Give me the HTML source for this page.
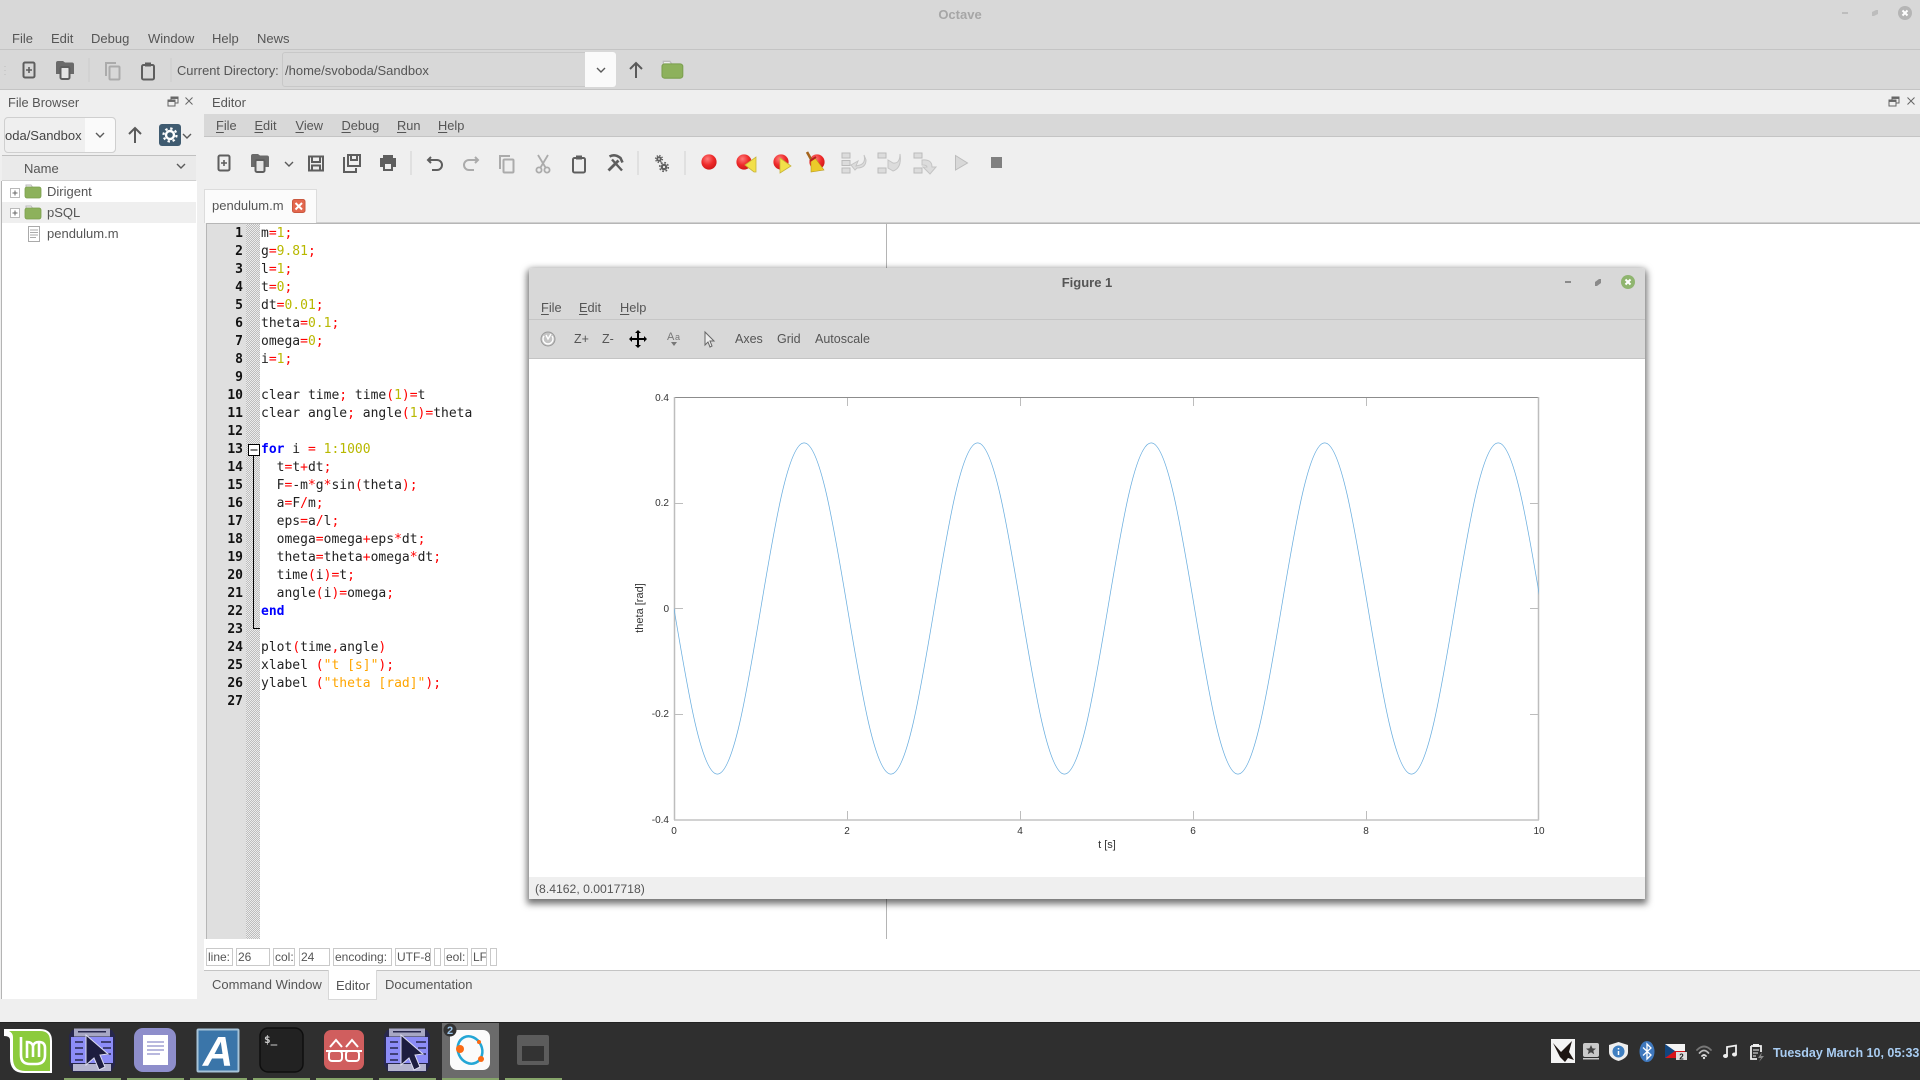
<!DOCTYPE html>
<html><head><meta charset="utf-8"><title>Octave</title>
<style>
html,body{margin:0;padding:0;width:1920px;height:1080px;overflow:hidden;background:#efefef}
body{position:relative;font-family:"Liberation Sans",sans-serif;font-size:13px;color:#555}
.b{position:absolute;box-sizing:border-box}
.t{position:absolute;white-space:pre;line-height:18px;height:18px}
.t u{text-decoration:underline;text-underline-offset:2px}
svg{position:absolute;left:0;top:0;overflow:visible}
#code,#nums{position:absolute;font-family:"DejaVu Sans Mono","Liberation Mono",monospace;font-size:13px;line-height:18px;white-space:pre;color:#222}
#nums{left:207px;width:36px;top:224.7px;text-align:right;font-weight:bold;color:#111}
#code{left:261px;top:224.7px}
#code i{font-style:normal;color:#f00}
#code b{font-weight:normal;color:#b8b800}
#code s{text-decoration:none;color:#ffa500}
#code em{font-style:normal;font-weight:bold;color:#00f}
.sb{position:absolute;top:948px;height:18px;box-sizing:border-box;border:1px solid #c9c9c9;line-height:17px;font-size:12px;padding-left:1px;white-space:pre;color:#555;overflow:hidden}
.tick{font-size:10px;color:#333;position:absolute;line-height:12px;white-space:pre}
</style></head><body>

<!-- main window backgrounds -->
<div class="b" style="left:0;top:0;width:1920px;height:89px;background:#d8d8d8"></div>
<div class="b" style="left:0;top:49px;width:1920px;height:1px;background:#c4c4c4"></div>
<div class="b" style="left:0;top:89px;width:1920px;height:1px;background:#c4c4c4"></div>
<div class="t" style="left:0;width:1920px;text-align:center;top:6px;font-weight:bold;color:#a6a6a6">Octave</div>

<div class="t" style="left:12px;top:30px">File</div>
<div class="t" style="left:51px;top:30px">Edit</div>
<div class="t" style="left:91px;top:30px">Debug</div>
<div class="t" style="left:148px;top:30px">Window</div>
<div class="t" style="left:212px;top:30px">Help</div>
<div class="t" style="left:257px;top:30px">News</div>

<div class="t" style="left:177px;top:62px;font-size:12.9px">Current Directory:</div>
<div class="b" style="left:282px;top:52px;width:334px;height:35px;border:1px solid #c8c8c8;border-radius:3px;background:#d8d8d8"></div>
<div class="b" style="left:585px;top:52px;width:31px;height:35px;background:#fafafa;border-radius:0 3px 3px 0"></div>
<div class="t" style="left:285px;top:62px">/home/svoboda/Sandbox</div>

<!-- file browser -->
<div class="t" style="left:8px;top:94px;font-size:12.8px">File Browser</div>
<div class="b" style="left:4px;top:117px;width:112px;height:36px;border:1px solid #cfcfcf;border-radius:4px;background:#efefef"></div>
<div class="b" style="left:85px;top:118px;width:30px;height:34px;background:#fafafa;border-radius:0 4px 4px 0"></div>
<div class="t" style="left:5px;top:126.500px;color:#444">oda/Sandbox</div>
<div class="b" style="left:2px;top:155px;width:194px;height:26px;background:#eaeaea;border-top:1px solid #c0c0c0;border-bottom:1px solid #d0d0d0"></div>
<div class="t" style="left:24px;top:160px">Name</div>
<div class="b" style="left:1px;top:181px;width:196px;height:818px;background:#fff;border-left:1px solid #b4b4b4"></div>
<div class="b" style="left:2px;top:202px;width:194px;height:21px;background:#efefef"></div>
<div class="t" style="left:47px;top:183px">Dirigent</div>
<div class="t" style="left:47px;top:204px">pSQL</div>
<div class="t" style="left:47px;top:224.500px">pendulum.m</div>

<!-- editor -->
<div class="t" style="left:212px;top:94px">Editor</div>
<div class="b" style="left:204px;top:114px;width:1716px;height:23px;background:#d8d8d8;border-bottom:1px solid #c4c4c4"></div>
<div class="t" style="left:216px;top:117px;font-size:12.8px"><u>F</u>ile</div>
<div class="t" style="left:254.500px;top:117px;font-size:12.8px"><u>E</u>dit</div>
<div class="t" style="left:295.500px;top:117px;font-size:12.8px"><u>V</u>iew</div>
<div class="t" style="left:341.500px;top:117px;font-size:12.8px"><u>D</u>ebug</div>
<div class="t" style="left:397px;top:117px;font-size:12.8px"><u>R</u>un</div>
<div class="t" style="left:438px;top:117px;font-size:12.8px"><u>H</u>elp</div>

<div class="b" style="left:204px;top:189px;width:113px;height:34px;background:#fbfbfb;border:1px solid #dcdcdc;border-bottom:none"></div>
<div class="t" style="left:212px;top:197px">pendulum.m</div>

<div class="b" style="left:204px;top:939px;width:1716px;height:31px;background:#fff"></div>
<div class="b" style="left:206px;top:223px;width:1714px;height:716px;background:#fff;border-top:1px solid #b6b6b6;border-left:1px solid #b6b6b6"></div>
<div class="b" style="left:207px;top:224px;width:39px;height:715px;background:#dfdfdf"></div>
<div class="b" style="left:246px;top:224px;width:14px;height:715px;background:repeating-conic-gradient(#bdbdbd 0 25%,#ececec 0 50%) 0 0/2px 2px"></div>
<div class="b" style="left:886px;top:224px;width:1px;height:715px;background:#b4b4b4"></div>
<div class="b" style="left:316px;top:222px;width:1604px;height:1px;background:#cfcfcf"></div>

<div id="nums">1
2
3
4
5
6
7
8
9
10
11
12
13
14
15
16
17
18
19
20
21
22
23
24
25
26
27</div>
<div id="code">m<i>=</i><b>1</b><i>;</i>
g<i>=</i><b>9.81</b><i>;</i>
l<i>=</i><b>1</b><i>;</i>
t<i>=</i><b>0</b><i>;</i>
dt<i>=</i><b>0.01</b><i>;</i>
theta<i>=</i><b>0.1</b><i>;</i>
omega<i>=</i><b>0</b><i>;</i>
i<i>=</i><b>1</b><i>;</i>

clear time<i>;</i> time<i>(</i><b>1</b><i>)=</i>t
clear angle<i>;</i> angle<i>(</i><b>1</b><i>)=</i>theta

<em>for</em> i <i>=</i> <b>1:1000</b>
  t<i>=</i>t<i>+</i>dt<i>;</i>
  F<i>=</i>-m<i>*</i>g<i>*</i>sin<i>(</i>theta<i>);</i>
  a<i>=</i>F<i>/</i>m<i>;</i>
  eps<i>=</i>a<i>/</i>l<i>;</i>
  omega<i>=</i>omega<i>+</i>eps<i>*</i>dt<i>;</i>
  theta<i>=</i>theta<i>+</i>omega<i>*</i>dt<i>;</i>
  time<i>(</i>i<i>)=</i>t<i>;</i>
  angle<i>(</i>i<i>)=</i>omega<i>;</i>
<em>end</em>

plot<i>(</i>time<i>,</i>angle<i>)</i>
xlabel <i>(</i><s>"t [s]"</s><i>);</i>
ylabel <i>(</i><s>"theta [rad]"</s><i>);</i>
</div>

<!-- status bar -->
<div class="sb" style="left:206px;width:27px">line:</div>
<div class="sb" style="left:236px;width:34px">26</div>
<div class="sb" style="left:273px;width:22px">col:</div>
<div class="sb" style="left:299px;width:31px">24</div>
<div class="sb" style="left:333px;width:59px">encoding:</div>
<div class="sb" style="left:395px;width:36px">UTF-8</div>
<div class="sb" style="left:434px;width:7px"></div>
<div class="sb" style="left:444px;width:24px">eol:</div>
<div class="sb" style="left:471px;width:16px">LF</div>
<div class="sb" style="left:490px;width:7px"></div>
<div class="b" style="left:204px;top:970px;width:1716px;height:1px;background:#c4c4c4"></div>

<div class="b" style="left:328px;top:970px;width:49px;height:30px;background:#fff;border:1px solid #d8d8d8;border-top:none"></div>
<div class="t" style="left:212px;top:976px">Command Window</div>
<div class="t" style="left:336px;top:977px">Editor</div>
<div class="t" style="left:385px;top:976px">Documentation</div>

<!-- base icons -->
<svg width="1920" height="1080" viewBox="0 0 1920 1080">
<defs>
<radialGradient id="rb" cx=".4" cy=".3" r=".8"><stop offset="0" stop-color="#ff7a7a"/><stop offset=".5" stop-color="#ee2a2a"/><stop offset="1" stop-color="#c81414"/></radialGradient>
<g id="up" fill="none" stroke="#5a5a5a" stroke-width="2"><path d="M0-7V8M-6-1 0-7 6-1"/></g>
<g id="chev" fill="none" stroke="#5a5a5a" stroke-width="1.4"><path d="M-4-2 0 2 4-2"/></g>
<g id="new"><rect x="-5.5" y="-7.5" width="11" height="15" rx="1.5" fill="none" stroke="#5e5e5e" stroke-width="2"/><path d="M0-3V3M-3 0H3" stroke="#5e5e5e" stroke-width="1.6"/></g>
<g id="open"><path d="M-9 4V-7Q-9-9-7-9H-2L0-7.5H7Q9-7.5 9-5.5V4Z" fill="#6a6a6a"/><rect x="-4.500" y="-3" width="9" height="12" rx="1.500" fill="#e4e4e4" stroke="#5e5e5e" stroke-width="2"/></g>
<g id="copy" fill="none" stroke="#ababab" stroke-width="2"><path d="M-7 5V-8H3"/><rect x="-3.5" y="-4.5" width="10" height="13" rx="1"/></g>
<g id="paste"><rect x="-6" y="-6" width="12" height="14.5" rx="1.5" fill="none" stroke="#5e5e5e" stroke-width="2"/><rect x="-3" y="-8.5" width="6" height="4" fill="#5e5e5e"/></g>
<g id="star"><path d="M0-5 1.5-1.6 5-1.4 2.3.8 3.2 4.2 0 2.3-3.2 4.2-2.3.8-5-1.4-1.5-1.6Z" fill="#444"/></g>
<g id="folder"><path d="M1 3V1H6L7.5 3" fill="#efefef" stroke="#bbb"/><rect x="0" y="3" width="16" height="11" rx="2" fill="#8db15c" stroke="#7b9f4e" stroke-width=".8"/></g>
<g id="exp"><rect x=".5" y=".5" width="9" height="9" fill="#fff" stroke="#b9b9b9"/><path d="M2.5 5H7.5M5 2.5V7.5" stroke="#666"/></g>
<g id="undock" fill="none" stroke="#666" stroke-width="1"><rect x="3" y="0" width="7" height="6" fill="#efefef"/><path d="M3 1.2H10" stroke-width="1.500"/><rect x="0" y="3" width="7" height="6" fill="#efefef"/><path d="M0 4.200H7" stroke-width="1.500"/></g>
<g id="xs" stroke="#666" stroke-width="1"><path d="M-3.500-3.500 3.500 3.500M3.500-3.500-3.500 3.500"/></g>
<g id="redball"><circle r="7.6" fill="url(#rb)"/></g>
<g id="arrowblock"><rect x="0" y="0" width="8" height="5" fill="#dcdcdc" stroke="#bbb"/></g>
</defs>

<!-- main toolbar -->
<path d="M5 66v1M5 70v1M5 74v1" stroke="#bbb"/>
<use href="#new" x="29" y="70"/>
<use href="#open" x="65" y="70"/>
<path d="M89 58V82M171 58V82" stroke="#cdcdcd"/>
<use href="#copy" x="113" y="71"/>
<use href="#paste" x="148" y="71"/>
<use href="#chev" x="601" y="70"/>
<use href="#up" x="636" y="70"/>
<g transform="translate(662 60) scale(1.3)"><use href="#folder"/></g>

<!-- dock headers -->
<use href="#undock" x="168" y="97"/>
<use href="#xs" x="189" y="101"/>
<use href="#undock" x="1889" y="97"/>
<use href="#xs" x="1911" y="101"/>

<!-- file browser icons -->
<use href="#chev" x="100" y="135"/>
<use href="#up" x="135" y="135"/>
<rect x="159" y="124" width="22" height="22" rx="3" fill="#3f5b70"/>
<circle cx="170" cy="135" r="4" fill="none" stroke="#fff" stroke-width="2.4"/>
<circle cx="170" cy="135" r="6.5" fill="none" stroke="#fff" stroke-width="2.2" stroke-dasharray="2.4 2.7"/>
<use href="#chev" x="187" y="136"/>
<use href="#chev" x="181" y="166"/>
<use href="#exp" x="10" y="188"/>
<use href="#exp" x="10" y="208"/>
<use href="#folder" x="25" y="184"/>
<use href="#folder" x="25" y="205"/>
<rect x="28.5" y="226.5" width="11" height="15" fill="#fff" stroke="#aaa"/>
<path d="M30 230H38M30 232.5H38M30 235H38M30 237.5H36" stroke="#aaa"/>

<!-- editor toolbar -->
<use href="#new" x="224" y="163"/>
<use href="#open" x="260" y="163"/>
<use href="#chev" x="289" y="164"/>
<g fill="none" stroke="#5e5e5e" stroke-width="2">
<path d="M309 156.5H323V170.5H309ZM312 156.5V162H320V156.5M312 170.5V165.5H320V170.5"/>
<path d="M348 155H360V166H348ZM351 155V160H357V155M345 158H344V172H356V168"/>
</g>
<path d="M383 158V155H393V158H396V167H393V171H383V167H380V158ZM385 164V169H391V164Z" fill="#5e5e5e" fill-rule="evenodd"/>
<path d="M411 151V175M638 151V175M685 151V175" stroke="#d0d0d0"/>
<path d="M431 157 428 160 431 163M428 160H437A5 5 0 0 1 437 170H432" fill="none" stroke="#5e5e5e" stroke-width="2"/>
<path d="M475 157 478 160 475 163M478 160H469A5 5 0 0 0 469 170H474" fill="none" stroke="#ababab" stroke-width="2"/>
<use href="#copy" x="507" y="164"/>
<g fill="none" stroke="#ababab" stroke-width="1.8"><circle cx="539" cy="170" r="2.6"/><circle cx="547" cy="170" r="2.6"/><path d="M540.5 167.5 548 155M545.5 167.5 538 155"/></g>
<use href="#paste" x="579" y="164"/>
<g fill="none" stroke="#5e5e5e"><path d="M608.500 170.500 618.500 160.500" stroke-width="2.800"/><path d="M622 170.500 612 159.500" stroke-width="2.400"/><path d="M609.500 156.500Q615 153.500 620.500 158L622.500 162.500" stroke-width="2.600"/></g>
<g fill="none" stroke="#5e5e5e"><circle cx="659" cy="159" r="1.800" stroke-width="1.800"/><circle cx="659" cy="159" r="3.400" stroke-width="1.400" stroke-dasharray="1.300 1.400"/><circle cx="664" cy="167" r="2.200" stroke-width="2.200"/><circle cx="664" cy="167" r="4.300" stroke-width="1.600" stroke-dasharray="1.700 1.700"/></g>

<use href="#redball" x="709" y="162"/>
<use href="#redball" x="744" y="162"/>
<path d="M745 165 756 157V172L754 172Z" fill="#f2e04a" stroke="#c8b43a" stroke-width=".8"/>
<use href="#redball" x="781" y="162"/>
<path d="M780 158 791 166 780 173Z" fill="#f2e04a" stroke="#c8b43a" stroke-width=".8"/>
<use href="#redball" x="817" y="162"/>
<path d="M807 152 812 161" stroke="#a5641c" stroke-width="2.600"/>
<path d="M811 160 815 158 824 170 811 172Z" fill="#eccb2a" stroke="#b99a1c" stroke-width=".6"/>
<path d="M810 161 816 157" stroke="#b82020" stroke-width="2"/>

<use href="#arrowblock" x="842" y="153"/><use href="#arrowblock" x="842" y="160.500"/><use href="#arrowblock" x="842" y="168"/>
<path d="M864 155Q866 163 860 165L856 166 858 161 851 165 855 170 857 168Q866 168 866 160Z" fill="#dcdcdc" stroke="#c4c4c4"/>
<use href="#arrowblock" x="878" y="153"/><use href="#arrowblock" x="878" y="168"/>
<path d="M900 154Q900 164 893 163L888 160V168L893 171Q902 168 900 154Z" fill="#dcdcdc" stroke="#c4c4c4"/>
<use href="#arrowblock" x="914" y="153"/><use href="#arrowblock" x="914" y="168"/>
<path d="M922 160Q932 159 932 167H936L930 174 923 167H927Q927 165 922 165Z" fill="#dcdcdc" stroke="#c4c4c4"/>
<path d="M955.500 155.500 967.500 163 955.500 170Z" fill="#d8d8d8" stroke="#bcbcbc"/>
<rect x="991" y="157" width="11" height="11" fill="#808080"/>

<!-- tab close -->
<rect x="292.500" y="199.500" width="12.500" height="13" rx="2" fill="#e4674e" stroke="#c9583f"/>
<path d="M295.500 203 302 209.500M302 203 295.500 209.500" stroke="#fff" stroke-width="2"/>

<!-- window controls -->
<rect x="1842" y="12" width="6" height="2" fill="#bdbdbd"/>
<path d="M1872 16V12L1876 10H1878V14L1874 16Z" fill="#bdbdbd"/>
<circle cx="1905" cy="13" r="7" fill="#b5b5b5"/>
<path d="M1902.500 10.500 1907.500 15.500M1907.500 10.500 1902.500 15.500" stroke="#fff" stroke-width="2"/>

<!-- fold marker -->
<rect x="248.500" y="444.500" width="11" height="11" fill="#fff" stroke="#000"/>
<path d="M250.500 450H257.500" stroke="#000"/>
<path d="M253.500 456V628.500H260" fill="none" stroke="#000"/>
</svg>

<!-- figure window -->
<div class="b" style="left:529px;top:268px;width:1116px;height:631px;background:#fff;box-shadow:0 3px 7px 2px rgba(0,0,0,.55);border-radius:3px 3px 0 0;overflow:hidden">
<div class="b" style="left:0;top:0;width:1116px;height:91px;background:#d8d8d8;border-bottom:1px solid #c4c4c4"></div>
<div class="b" style="left:0;top:51px;width:1116px;height:1px;background:#c6c6c6"></div>
<div class="b" style="left:0;top:609px;width:1116px;height:22px;background:#efefef"></div>
</div>
<div class="t" style="left:529px;width:1116px;text-align:center;top:274px;font-weight:bold;color:#555">Figure 1</div>
<div class="t" style="left:541px;top:299px;font-size:12.8px"><u>F</u>ile</div>
<div class="t" style="left:579px;top:299px;font-size:12.8px"><u>E</u>dit</div>
<div class="t" style="left:620px;top:299px;font-size:12.8px"><u>H</u>elp</div>
<div class="t" style="left:574px;top:330px;font-size:12.500px">Z+</div>
<div class="t" style="left:602px;top:330px;font-size:12.500px">Z-</div>
<div class="t" style="left:735px;top:330px;font-size:12.500px">Axes</div>
<div class="t" style="left:777px;top:330px;font-size:12.500px">Grid</div>
<div class="t" style="left:815px;top:330px;font-size:12.500px">Autoscale</div>
<div class="t" style="left:535px;top:880px;font-size:12.200px">(8.4162, 0.0017718)</div>

<div class="tick" style="left:649px;top:393px;width:20px;text-align:right">0.4</div>
<div class="tick" style="left:649px;top:498px;width:20px;text-align:right">0.2</div>
<div class="tick" style="left:649px;top:604px;width:20px;text-align:right">0</div>
<div class="tick" style="left:644px;top:709px;width:25px;text-align:right">-0.2</div>
<div class="tick" style="left:644px;top:815px;width:25px;text-align:right">-0.4</div>
<div class="tick" style="left:664px;width:20px;text-align:center;top:826px">0</div>
<div class="tick" style="left:837px;width:20px;text-align:center;top:826px">2</div>
<div class="tick" style="left:1010px;width:20px;text-align:center;top:826px">4</div>
<div class="tick" style="left:1183px;width:20px;text-align:center;top:826px">6</div>
<div class="tick" style="left:1356px;width:20px;text-align:center;top:826px">8</div>
<div class="tick" style="left:1526px;width:26px;text-align:center;top:826px">10</div>
<div class="tick" style="left:1087px;width:40px;text-align:center;top:839px;font-size:11px">t [s]</div>
<div class="tick" style="left:600px;width:80px;text-align:center;top:602px;font-size:11px;transform:rotate(-90deg)">theta [rad]</div>

<svg width="1920" height="1080" viewBox="0 0 1920 1080">
<defs><clipPath id="pc"><rect x="674" y="397" width="865" height="423"/></clipPath></defs>
<!-- figure window buttons -->
<rect x="1565" y="281" width="6" height="2" fill="#8a8a8a"/>
<path d="M1595 286V282L1599 279H1601V283L1597 286Z" fill="#8a8a8a"/>
<circle cx="1628" cy="282" r="7" fill="#8fb56f"/>
<path d="M1625.500 279.500 1630.500 284.500M1630.500 279.500 1625.500 284.500" stroke="#fff" stroke-width="2"/>
<!-- figure toolbar icons -->
<circle cx="548" cy="339" r="7" fill="#c4c4c4" stroke="#9a9a9a"/>
<path d="M544 336A5 5 0 1 0 552 336M546 335 548 339 551 334" fill="none" stroke="#fff" stroke-width="1.400"/>
<path d="M638 331V347M630 339H646" stroke="#000" stroke-width="2"/>
<path d="M638 330 641 333H635ZM638 348 641 345H635ZM629 339 632 336V342ZM647 339 644 336V342Z" fill="#000"/>
<text x="667" y="340" font-family="Liberation Sans,sans-serif" font-size="11" fill="#777">A</text>
<text x="675" y="340" font-family="Liberation Sans,sans-serif" font-size="9" fill="#777">a</text>
<path d="M671 342H677L674 346Z" fill="#777"/>
<path d="M705 332V345L708 342 710 347 712 346 710 341H714Z" fill="#eee" stroke="#666"/>
<!-- plot -->
<g fill="none" stroke="#bdbdbd" stroke-width="1">
<path d="M847.500 397V406M1020.500 397V406M1193.500 397V406M1366.500 397V406"/>
<path d="M847.500 820V811M1020.500 820V811M1193.500 820V811M1366.500 820V811"/>
<path d="M674 503.500H683M674 608.500H683M674 714.500H683"/>
<path d="M1539 503.500H1530M1539 608.500H1530M1539 714.500H1530"/>
</g>
<path d="M674 397.500H1539" stroke="#8c8c8c" fill="none"/>
<path d="M674.500 397V820M1538.500 397V820" stroke="#bdbdbd" stroke-width="1.500" fill="none"/>
<path d="M674 820H1539" stroke="#c4c4c4" stroke-width="1.500" fill="none"/>
<g clip-path="url(#pc)">
<path fill="none" stroke="#6aaedf" stroke-width=".75" d="M674 608.500
c14.150 84.840 27.680 165.600 43.380 165.600 c15.700 0 29.230 -80.760 43.380 -165.600 c14.150 -84.840 27.680 -165.600 43.380 -165.600 c15.700 0 29.230 80.760 43.380 165.600
c14.150 84.840 27.680 165.600 43.380 165.600 c15.700 0 29.230 -80.760 43.380 -165.600 c14.150 -84.840 27.680 -165.600 43.380 -165.600 c15.700 0 29.230 80.760 43.380 165.600
c14.150 84.840 27.680 165.600 43.380 165.600 c15.700 0 29.230 -80.760 43.380 -165.600 c14.150 -84.840 27.680 -165.600 43.380 -165.600 c15.700 0 29.230 80.760 43.380 165.600
c14.150 84.840 27.680 165.600 43.380 165.600 c15.700 0 29.230 -80.760 43.380 -165.600 c14.150 -84.840 27.680 -165.600 43.380 -165.600 c15.700 0 29.230 80.760 43.380 165.600
c14.150 84.840 27.680 165.600 43.380 165.600 c15.700 0 29.230 -80.760 43.380 -165.600 c14.150 -84.840 27.680 -165.600 43.380 -165.600 c15.700 0 29.230 80.760 43.380 165.600"/>
</g>
</svg>

<!-- taskbar -->
<div class="b" style="left:0;top:1022px;width:1920px;height:58px;background:#2f2f2f;border-top:1px solid #222"></div>
<div class="b" style="left:442px;top:1023px;width:57px;height:57px;background:#6b6b6b"></div>
<div class="b" style="left:64px;top:1078px;width:57px;height:2px;background:#86a56a"></div>
<div class="b" style="left:127px;top:1078px;width:57px;height:2px;background:#86a56a"></div>
<div class="b" style="left:190px;top:1078px;width:57px;height:2px;background:#86a56a"></div>
<div class="b" style="left:253px;top:1078px;width:57px;height:2px;background:#86a56a"></div>
<div class="b" style="left:316px;top:1078px;width:57px;height:2px;background:#86a56a"></div>
<div class="b" style="left:379px;top:1078px;width:57px;height:2px;background:#86a56a"></div>
<div class="b" style="left:442px;top:1078px;width:57px;height:2px;background:#86a56a"></div>
<div class="b" style="left:505px;top:1078px;width:57px;height:2px;background:#86a56a"></div>

<svg width="1920" height="1080" viewBox="0 0 1920 1080">
<defs>
<g id="nemo">
<path d="M3 3H43L46 8V38L42 45H4L0 38V8Z" fill="#27274d"/>
<rect x="5" y="1.500" width="36" height="8" fill="#a7a7c4"/>
<rect x="9" y="4" width="28" height="1.500" fill="#27274d"/>
<rect x="2" y="10" width="42" height="26" fill="#8c8cf7"/>
<rect x="4" y="37" width="38" height="7" fill="#b5b5cf"/>
<path d="M6 15H14M6 21H14M6 27H14M6 33H14M32 15H42M34 21H42M36 27H42" stroke="#27274d" stroke-width="1.500"/>
<path d="M17 8 39 27 31 28 36 40 30 43 25 31 17 38Z" fill="#1d1d3f" stroke="#dcdcef" stroke-width="1"/>
</g>
</defs>
<!-- mint -->
<path d="M4 1029H40Q52 1029 52 1041V1073H24Q10 1073 10 1058V1040Q10 1036 4 1036Z" fill="#fff"/>
<path d="M9 1031H40Q50 1031 50 1041V1071H25Q13 1071 13 1058V1037Q13 1033 9 1031Z" fill="#8ccb3c"/>
<path d="M21 1037V1055Q21 1064 30 1064H36Q45 1064 45 1055V1048Q45 1042 39 1042 34 1042 33 1046 32 1042 27 1042V1058M33 1046V1057M39 1042V1057" fill="none" stroke="#fff" stroke-width="2.600"/>
<use href="#nemo" x="69" y="1027"/>
<!-- document -->
<rect x="134" y="1028" width="42" height="44" rx="9" fill="#8e8ecb"/>
<rect x="143" y="1035" width="25" height="30" fill="#fff"/>
<path d="M147 1042H164M147 1046H164M147 1050H164M147 1054H160" stroke="#8e8ecb" stroke-width="1.300"/>
<!-- A -->
<rect x="197.500" y="1029.500" width="41" height="42" rx="1" fill="#3a75a9" stroke="#a6c3d8" stroke-width="2"/>
<text x="218" y="1066" text-anchor="middle" font-family="Liberation Sans,sans-serif" font-size="42" font-weight="bold" font-style="italic" fill="#fff">A</text>
<!-- terminal -->
<rect x="260" y="1028" width="43" height="44" rx="8" fill="#222" stroke="#0e0e0e" stroke-width="1.500"/>
<text x="264" y="1043" font-family="DejaVu Sans Mono,monospace" font-size="11" font-weight="bold" fill="#ccc">$_</text>
<!-- glasses -->
<rect x="324" y="1030" width="40" height="40" rx="7" fill="#d05e5e"/>
<g fill="none" stroke="#fff" stroke-width="2"><path d="M330 1047 336 1040 342 1047M346 1047 352 1040 358 1047"/><rect x="329" y="1051" width="13" height="10" rx="3"/><rect x="346" y="1051" width="13" height="10" rx="3"/><path d="M326 1051H362"/></g>
<use href="#nemo" x="384" y="1027"/>
<!-- octave -->
<rect x="450" y="1030" width="40" height="40" rx="7" fill="#fbfbfb"/>
<ellipse cx="470" cy="1050" rx="12" ry="14" transform="rotate(-25 470 1050)" fill="none" stroke="#23a6d5" stroke-width="2.500"/>
<circle cx="460" cy="1049" r="4" fill="#fb6a14"/><circle cx="479" cy="1042" r="2" fill="#fb6a14"/><circle cx="481" cy="1059" r="3" fill="#fb6a14"/>
<circle cx="450" cy="1030" r="6.500" fill="#333"/>
<text x="450" y="1034" text-anchor="middle" font-family="Liberation Sans,sans-serif" font-size="11" font-weight="bold" fill="#9cc4e8">2</text>
<!-- window icon -->
<rect x="517" y="1035" width="32" height="30" rx="2" fill="#5c5c5c"/>
<rect x="522" y="1046" width="22" height="15" fill="#333"/>

<!-- tray -->
<rect x="1551" y="1039" width="24" height="24" fill="#f4f4f4"/>
<path d="M1553 1043 1561 1052 1572 1041 1569 1052 1574 1060 1568 1058 1565 1062 1560 1057Z" fill="#1d1512"/>
<rect x="1583" y="1043" width="16" height="14" rx="2" fill="#c9c9c9"/>
<rect x="1583" y="1058" width="16" height="1.500" fill="#c9c9c9"/>
<use href="#star" x="1591" y="1050"/>
<path d="M1618.500 1042 1628 1045V1052Q1628 1058 1618.500 1061 1609 1058 1609 1052V1045Z" fill="#eee"/>
<circle cx="1618.500" cy="1051.500" r="6" fill="#3f7fc1"/>
<path d="M1618.500 1048V1049.500M1618.500 1051V1055" stroke="#fff" stroke-width="1.500"/>
<ellipse cx="1647" cy="1051.500" rx="7.500" ry="10.500" fill="#3f78bd"/>
<path d="M1643 1047.500 1651 1055 1647 1059V1044L1651 1048 1643 1055.500" fill="none" stroke="#fff" stroke-width="1.300"/>
<rect x="1665" y="1044" width="20" height="7" fill="#f4f4f4"/><rect x="1665" y="1051" width="20" height="7" fill="#d7141a"/>
<path d="M1665 1044V1058L1675 1051Z" fill="#11457e"/>
<rect x="1676" y="1052" width="11" height="8" fill="#ddd"/>
<text x="1681.500" y="1059.500" text-anchor="middle" font-family="Liberation Sans,sans-serif" font-size="8" font-weight="bold" fill="#222">2</text>
<g fill="none" stroke-linecap="round" stroke-width="1.800"><path d="M1697 1050Q1704 1043 1711 1050" stroke="#777"/><path d="M1699.500 1053Q1704 1048 1708.500 1053" stroke="#bbb"/><path d="M1702 1056Q1704 1054 1706 1056" stroke="#ddd"/></g>
<circle cx="1704" cy="1058" r="1.200" fill="#ddd"/>
<path d="M1727 1056V1047L1736 1045.500V1054" fill="none" stroke="#eee" stroke-width="1.800"/>
<ellipse cx="1725.500" cy="1056" rx="2.500" ry="2" fill="#eee"/><ellipse cx="1734.500" cy="1054.500" rx="2.500" ry="2" fill="#eee"/>
<path d="M1751 1046H1761V1052M1751 1046V1059H1757" fill="none" stroke="#eee" stroke-width="1.800"/>
<rect x="1753" y="1044" width="6" height="3" fill="#eee"/>
<path d="M1753 1050H1759M1753 1053H1758M1753 1056H1756" stroke="#eee"/>
<path d="M1762 1052 1758 1058H1761L1759 1062 1764 1056H1761Z" fill="#888"/>
</svg>
<div class="t" style="left:1773px;top:1044px;font-weight:bold;font-size:12.500px;color:#a9cdf2">Tuesday March 10, 05:33</div>

</body></html>
